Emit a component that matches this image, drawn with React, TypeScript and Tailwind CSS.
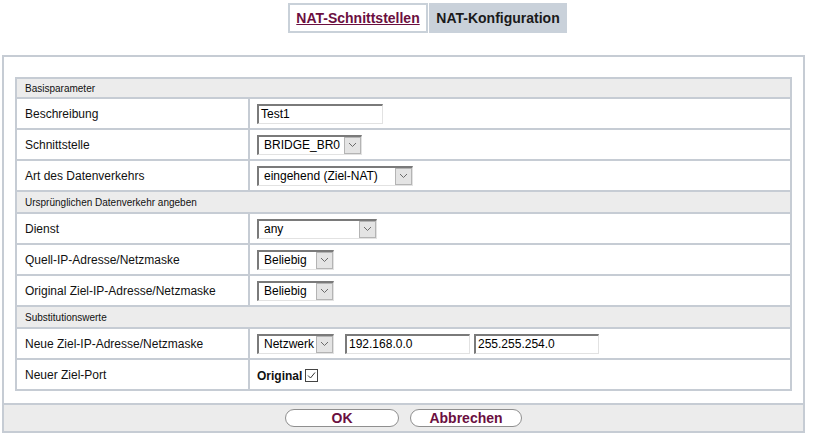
import React from "react";

const Chevron = () => (
  <svg width="9" height="6" viewBox="0 0 9 6" fill="none">
    <path d="M1 1 L4.5 4.5 L8 1" stroke="#6b6b6b" strokeWidth="1" />
  </svg>
);

function Select({ value, width }: { value: string; width: number }) {
  return (
    <div
      className="flex h-[20px] items-stretch border-t-2 border-l-2 border-r border-b border-t-[#7a7a7a] border-l-[#7a7a7a] border-r-[#e2e2e2] border-b-[#e2e2e2] bg-white"
      style={{ width }}
    >
      <div className="flex flex-1 items-center pl-[5px] text-[12px] leading-none text-black">{value}</div>
      <div className="flex w-[17px] items-center justify-center border border-[#b4b4b4] bg-[#e4e4e4]">
        <Chevron />
      </div>
    </div>
  );
}

function Input({ value, width }: { value: string; width: number }) {
  return (
    <div
      className="flex h-[20px] items-center border-t-2 border-l-2 border-r border-b border-t-[#7a7a7a] border-l-[#7a7a7a] border-r-[#e2e2e2] border-b-[#e2e2e2] bg-white pl-[2px] text-[12px] leading-none text-black"
      style={{ width }}
    >
      {value}
    </div>
  );
}

function Header({ title, first }: { title: string; first?: boolean }) {
  return (
    <div
      className={
        "flex items-center border-b-2 border-[#c6ccd4] bg-[#ececec] pl-[8px] text-[10px] text-[#111] " +
        (first ? "h-[20px]" : "h-[22px]")
      }
    >
      {title}
    </div>
  );
}

function Row({ label, children, last }: { label: string; children: React.ReactNode; last?: boolean }) {
  return (
    <div className={"flex " + (last ? "h-[29px]" : "h-[31px] border-b-2 border-[#c6ccd4]")}>
      <div className="flex w-[233px] items-center border-r-2 border-[#c6ccd4] pl-[8px] text-[12px] text-[#111]">{label}</div>
      <div className="flex flex-1 items-center gap-[11px] pl-[7px]">{children}</div>
    </div>
  );
}

export default function App() {
  return (
    <div className="h-[447px] w-[823px] bg-white font-['Liberation_Sans',Arial,sans-serif]">
      <div className="flex h-[55px] items-start pt-[3px] pl-[288px]">
        <div className="flex h-[30px] w-[140px] items-center justify-center border-2 border-[#c9d1d9] bg-white text-[14px] font-bold text-[#6b0f3f] underline">
          NAT-Schnittstellen
        </div>
        <div className="ml-[1px] flex h-[30px] w-[138px] items-center justify-center bg-[#c9d1da] text-[14px] font-bold text-[#1a1a1a]">
          NAT-Konfiguration
        </div>
      </div>
      <div className="ml-[2px] w-[803px] border-2 border-[#c6ccd4]">
        <div className="mx-[11px] mt-[20px] mb-[12px] border-2 border-[#c6ccd4]">
          <Header title="Basisparameter" first />
          <Row label="Beschreibung">
            <Input value="Test1" width={126} />
          </Row>
          <Row label="Schnittstelle">
            <Select value="BRIDGE_BR0" width={105} />
          </Row>
          <Row label="Art des Datenverkehrs">
            <Select value="eingehend (Ziel-NAT)" width={156} />
          </Row>
          <Header title="Ursprünglichen Datenverkehr angeben" />
          <Row label="Dienst">
            <Select value="any" width={120} />
          </Row>
          <Row label="Quell-IP-Adresse/Netzmaske">
            <Select value="Beliebig" width={77} />
          </Row>
          <Row label="Original Ziel-IP-Adresse/Netzmaske">
            <Select value="Beliebig" width={77} />
          </Row>
          <Header title="Substitutionswerte" />
          <Row label="Neue Ziel-IP-Adresse/Netzmaske">
            <Select value="Netzwerk" width={77} />
            <div className="flex gap-[4px]">
              <Input value="192.168.0.0" width={125} />
              <Input value="255.255.254.0" width={125} />
            </div>
          </Row>
          <Row label="Neuer Ziel-Port" last>
            <div className="flex items-center gap-[3px] pt-[2px]">
              <span className="text-[12px] font-bold text-[#111]">Original</span>
              <span className="flex h-[13px] w-[13px] items-center justify-center border border-[#444] bg-white">
                <svg width="11" height="11" viewBox="0 0 11 11" fill="none">
                  <path d="M2 5.5 L4.5 8 L9 2.5" stroke="#333" strokeWidth="1" />
                </svg>
              </span>
            </div>
          </Row>
        </div>
        <div className="flex h-[28px] items-center justify-center gap-[11px] border-t-2 border-[#c6ccd4] bg-[#ececec]">
          <button className="flex h-[18px] w-[114px] items-center justify-center rounded-full border border-[#8f8f8f] bg-white text-[14px] font-bold leading-none text-[#6b0f3f]">
            OK
          </button>
          <button className="flex h-[18px] w-[112px] items-center justify-center rounded-full border border-[#8f8f8f] bg-white text-[14px] font-bold leading-none text-[#6b0f3f]">
            Abbrechen
          </button>
        </div>
      </div>
    </div>
  );
}
